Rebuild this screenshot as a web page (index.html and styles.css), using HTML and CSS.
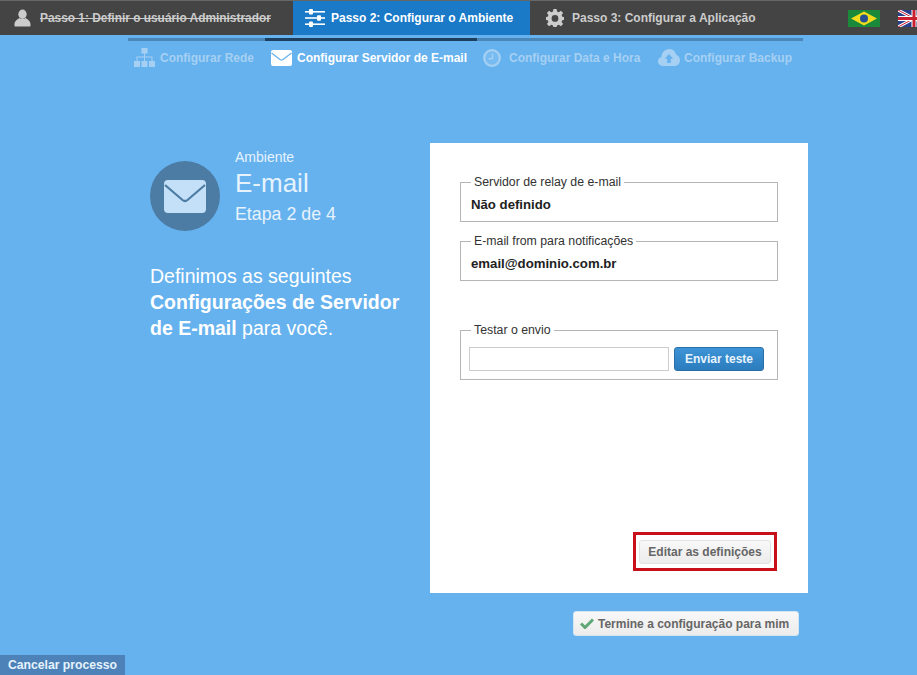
FILE: index.html
```html
<!DOCTYPE html>
<html lang="pt-BR">
<head>
    <meta charset="UTF-8">
    <title>Configurar Servidor de E-mail</title>
    <link rel="stylesheet" href="styles.css">
</head>
<body>

    <div class="topbar">
        <div class="step step-one">
            <svg class="step-icon" width="17" height="18" viewBox="0 0 18 18"><ellipse cx="9" cy="5" rx="4.4" ry="5" fill="#ccc"/><path d="M1 18 C0.5 18 0.5 17 0.5 16 C0.5 12 3.5 10.5 6 9 C7 10.5 11 10.5 12 9 C14.5 10.5 17.5 12 17.5 16 C17.5 17 17.5 18 17 18 Z" fill="#ccc"/></svg>
            <span class="done">Passo 1: Definir o usuário Administrador</span>
        </div>
        <div class="step step-two">
            <svg class="step-icon" width="20" height="18" viewBox="0 0 20 18"><g fill="#fff"><rect x="0" y="2" width="20" height="1.6"/><rect x="0" y="8.2" width="20" height="1.6"/><rect x="0" y="14.4" width="20" height="1.6"/><rect x="4" y="0" width="4" height="5.5" rx="1"/><rect x="12" y="6.2" width="4" height="5.5" rx="1"/><rect x="4" y="12.4" width="4" height="5.5" rx="1"/></g></svg>
            <span>Passo 2: Configurar o Ambiente</span>
        </div>
        <div class="step step-three">
            <svg class="step-icon" width="18" height="18" viewBox="0 0 18 18"><path fill="#ccc" fill-rule="evenodd" d="M7.4 0 H10.6 L11 2.5 L12.8 3.2 L14.9 1.7 L17.1 3.9 L15.6 6 L16.3 7.7 L18 8 V11 L16.3 11.3 L15.6 13 L17.1 15 L14.9 17.2 L12.8 15.8 L11 16.5 L10.6 18 H7.4 L7 16.5 L5.2 15.8 L3.1 17.2 L0.9 15 L2.4 13 L1.7 11.3 L0 11 V8 L1.7 7.7 L2.4 6 L0.9 3.9 L3.1 1.7 L5.2 3.2 L7 2.5 Z M9 6 A3.4 3.4 0 1 0 9 12.8 A3.4 3.4 0 1 0 9 6 Z"/></svg>
            <span>Passo 3: Configurar a Aplicação</span>
        </div>
        <div class="flags">
            <svg width="32" height="17" viewBox="0 0 32 17"><rect width="32" height="17" fill="#1a8a3a"/><path d="M16 1.5 L29 8.5 L16 15.5 L3 8.5 Z" fill="#f2dc1c"/><circle cx="16" cy="8.5" r="4" fill="#24508f"/></svg>
            <svg width="32" height="17" viewBox="0 0 32 17"><rect width="32" height="17" fill="#27408b"/><path d="M0 0 L32 17 M32 0 L0 17" stroke="#fff" stroke-width="3"/><path d="M0 0 L32 17 M32 0 L0 17" stroke="#c8202f" stroke-width="1"/><path d="M16 0 V17 M0 8.5 H32" stroke="#fff" stroke-width="5"/><path d="M16 0 V17 M0 8.5 H32" stroke="#c8202f" stroke-width="3"/></svg>
        </div>
    </div>

    <div class="subnav">
        <div class="subnav-item item-network">
            <svg width="21" height="19" viewBox="0 0 21 19"><g fill="#a5d0f3"><rect x="7.5" y="0" width="6" height="5.5"/><rect x="0" y="13" width="6" height="6"/><rect x="7.5" y="13" width="6" height="6"/><rect x="15" y="13" width="6" height="6"/><path d="M10 5 H11 V8.5 H18.5 V13 H17.5 V9.5 H11 V13 H10 V9.5 H3.5 V13 H2.5 V8.5 H10 Z"/></g></svg>
            <span>Configurar Rede</span>
        </div>
        <div class="subnav-item item-mail active">
            <svg width="21" height="16" viewBox="0 0 21 16"><rect width="21" height="16" rx="2" fill="#fff"/><path d="M0.5 3 L9 9.5 Q10.5 10.5 12 9.5 L20.5 3" fill="none" stroke="#66b2ee" stroke-width="1.2"/></svg>
            <span>Configurar Servidor de E-mail</span>
        </div>
        <div class="subnav-item item-clock">
            <svg width="18" height="18" viewBox="0 0 18 18"><circle cx="9" cy="9" r="7.8" fill="#78bbf0" stroke="#a5d0f3" stroke-width="2.2"/><path d="M9.5 4.5 V9.8 H5.5" fill="none" stroke="#a5d0f3" stroke-width="1.4"/></svg>
            <span>Configurar Data e Hora</span>
        </div>
        <div class="subnav-item item-backup">
            <svg width="22" height="17" viewBox="0 0 22 17"><path fill="#a5d0f3" fill-rule="evenodd" d="M5 17 C2 17 0 15 0 12.3 C0 10 1.5 8.4 3.5 8 C3.5 4 6.5 0 11.5 0 C15 0 17.5 2.5 18 5.5 C20.5 6.5 22 8.7 22 11.3 C22 14.7 19.5 17 16.5 17 Z M11 5 L6.8 9.8 H9.2 V14 H12.8 V9.8 H15.2 Z"/></svg>
            <span>Configurar Backup</span>
        </div>
    </div>

    <div class="content">
        <div class="intro">
            <div class="intro-head">
                <div class="intro-icon">
                    <svg width="42" height="33" viewBox="0 0 42 33"><rect width="42" height="33" rx="4" fill="#c3e0f8"/><path d="M1 5 L18.5 20 Q21 22 23.5 20 L41 5" fill="none" stroke="#4c7ba3" stroke-width="2.2"/></svg>
                </div>
                <div class="intro-title">
                    <div class="section">Ambiente</div>
                    <div class="title">E-mail</div>
                    <div class="stage">Etapa 2 de 4</div>
                </div>
            </div>
            <p class="intro-text">Definimos as seguintes<br><b>Configurações de Servidor</b><br><b>de E-mail</b> para você.</p>
        </div>

        <div class="panel">
            <fieldset class="field">
                <legend>Servidor de relay de e-mail</legend>
                <div class="value">Não definido</div>
            </fieldset>
            <fieldset class="field">
                <legend>E-mail from para notificações</legend>
                <div class="value">email@dominio.com.br</div>
            </fieldset>
            <fieldset class="field test">
                <legend>Testar o envio</legend>
                <div class="test-row">
                    <input type="text" class="test-input">
                    <button class="btn-blue">Enviar teste</button>
                </div>
            </fieldset>
            <div class="edit-box">
                <button class="btn-grey">Editar as definições</button>
            </div>
        </div>
    </div>

    <div class="finish">
        <button class="btn-finish">
            <svg width="14" height="11" viewBox="0 0 14 11"><path d="M1 5.5 L5 9.5 L13 1.5" fill="none" stroke="#5fa777" stroke-width="3"/></svg>
            Termine a configuração para mim
        </button>
    </div>

    <div class="cancel">Cancelar processo</div>

</body>
</html>
```

FILE: styles.css
```css
html, body {
    height: 675px;
    overflow: hidden;
}

body {
    margin: 0;
    background-color: #66b2ee;
    font-family: "Liberation Sans", Arial, sans-serif;
    font-size: 12px;
    display: flex;
    flex-direction: column;
}

.topbar {
    display: flex;
    height: 35px;
    background-color: #444444;
    border-top: 1px solid #666666;
    box-sizing: border-box;
    font-weight: bold;
    color: #cccccc;
}

.step {
    display: flex;
    align-items: center;
    gap: 8px;
}

.step-one {
    width: 293px;
    padding-left: 14px;
    gap: 9px;
    box-sizing: border-box;
}

.step-two {
    width: 237px;
    padding-left: 12px;
    gap: 6px;
    box-sizing: border-box;
    background-color: #1a7ac8;
    color: #ffffff;
}

.step-three {
    padding-left: 16px;
}

.done {
    text-decoration: line-through;
    font-size: 11.9px;
}

.flags {
    margin-left: auto;
    margin-right: -13px;
    display: flex;
    align-items: center;
    gap: 18px;
}

.subnav {
    display: flex;
    width: 675px;
    margin: 3px 0 0 128px;
    height: 32px;
    font-weight: bold;
    color: #a5d0f3;
    background: linear-gradient(to right, #4a86b8 137px, #1c3f5f 137px, #1c3f5f 349px, #4a86b8 349px) top / 100% 3px no-repeat;
}

.subnav-item {
    display: flex;
    align-items: center;
    gap: 5px;
    padding-top: 7px;
    box-sizing: border-box;
}

.item-network {
    width: 137px;
    padding-left: 6px;
}

.item-mail {
    width: 212px;
    padding-left: 6px;
}

.item-clock {
    width: 181px;
    padding-left: 6px;
    gap: 8px;
}

.item-backup {
    gap: 4px;
}

.active {
    color: #ffffff;
}

.content {
    display: flex;
    margin: 73px 0 0 150px;
}

.intro {
    width: 280px;
    color: #ffffff;
}

.intro-head {
    display: flex;
    gap: 15px;
    margin-top: 6px;
    color: #e6f3fd;
}

.intro-icon {
    width: 70px;
    height: 70px;
    margin-top: 12px;
    border-radius: 50%;
    background-color: #4c7ba3;
    display: flex;
    align-items: center;
    justify-content: center;
}

.section {
    font-size: 14px;
    line-height: 16px;
}

.title {
    font-size: 26px;
    line-height: 29px;
    margin-top: 4px;
}

.stage {
    font-size: 17.8px;
    line-height: 20px;
    margin-top: 6px;
}

.intro-text {
    margin: 32px 0 0;
    font-size: 19.5px;
    line-height: 26px;
}

.panel {
    width: 378px;
    height: 450px;
    box-sizing: border-box;
    padding: 32px 30px 22px;
    background-color: #ffffff;
    display: flex;
    flex-direction: column;
}

.field {
    margin: 0 0 12px;
    padding: 0 10px;
    height: 47px;
    box-sizing: border-box;
    border: 1px solid #b5b5b5;
    min-width: 0;
}

.field legend {
    padding: 0 3px;
    font-size: 12.3px;
    line-height: 14px;
    color: #333333;
}

.value {
    font-size: 13.2px;
    font-weight: bold;
    line-height: 16px;
    margin-top: 8px;
    color: #222222;
}

.test {
    margin: 30px 0 0;
    height: 57px;
    padding: 0 13px 0 8px;
}

.test legend {
    padding: 0 3px;
    margin-left: 2px;
}

.test-row {
    display: flex;
    gap: 5px;
    margin-top: 10px;
}

.test-input {
    width: 200px;
    height: 24px;
    padding: 0;
    box-sizing: border-box;
    border: 1px solid #cccccc;
}

.btn-blue {
    width: 90px;
    height: 24px;
    padding: 0;
    border: 1px solid #2a6ea8;
    border-radius: 3px;
    background: linear-gradient(#3d94d6, #2b7cbd);
    color: #e6f3fd;
    font: bold 12px "Liberation Sans", Arial, sans-serif;
}

.edit-box {
    margin-top: auto;
    align-self: flex-end;
    margin-right: 1px;
    padding: 4px 3px;
    border: 3px solid #c8101a;
    height: 39px;
    box-sizing: border-box;
    display: flex;
    align-items: center;
}

.btn-grey {
    width: 132px;
    height: 24px;
    padding: 0;
    border: 1px solid #e2e2e2;
    border-radius: 3px;
    background: linear-gradient(#f8f8f8, #ececec);
    color: #666666;
    font: bold 12px "Liberation Sans", Arial, sans-serif;
}

.finish {
    display: flex;
    margin: 18px 0 0 573px;
}

.btn-finish {
    width: 226px;
    height: 25px;
    padding: 0 0 0 6px;
    box-sizing: border-box;
    display: flex;
    align-items: center;
    gap: 4px;
    border: 1px solid #d5e6f3;
    border-radius: 3px;
    background: linear-gradient(#f8f8f8, #ececec);
    color: #666666;
    font: bold 12px "Liberation Sans", Arial, sans-serif;
}

.cancel {
    margin-top: auto;
    width: 125px;
    height: 20px;
    line-height: 21px;
    box-sizing: border-box;
    padding-left: 8px;
    background-color: #4c82b8;
    color: #e6f3fd;
    font-weight: bold;
    font-size: 12.2px;
}
```
